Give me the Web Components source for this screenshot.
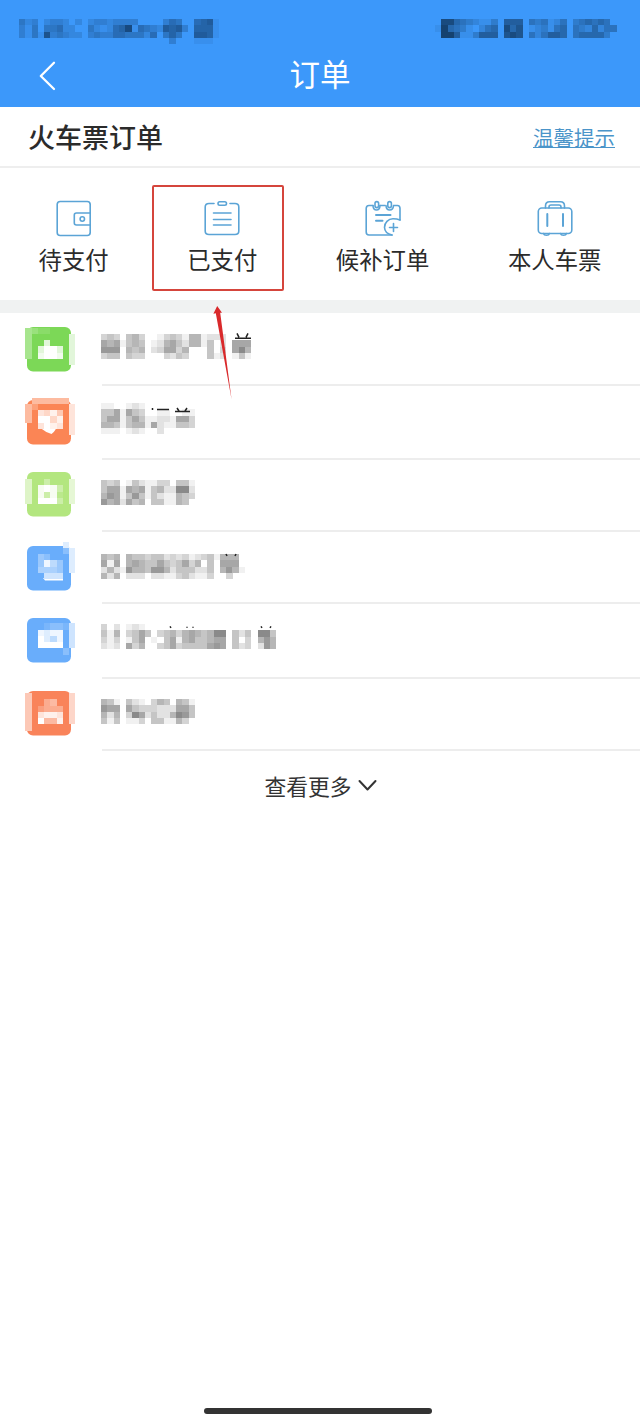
<!DOCTYPE html>
<html lang="zh-CN">
<head>
<meta charset="utf-8">
<title>订单</title>
<style>
    html, body { margin: 0; background: #fff; }
    body {
        font-family: "Noto Sans CJK SC", "Noto Sans", sans-serif;
        color: #2b2b2b;
    }
</style>
</head>
<body>

<orders-page>
    <status-bar slot="top"></status-bar>
    <nav-bar slot="top">订单</nav-bar>

    <section-head slot="top">火车票订单<span slot="link">温馨提示</span></section-head>

    <action-row slot="top">
        <action-item icon="wallet">待支付</action-item>
        <action-item icon="clipboard" marked>已支付</action-item>
        <action-item icon="calendar">候补订单</action-item>
        <action-item icon="suitcase">本人车票</action-item>
    </action-row>

    <order-list slot="list"></order-list>
    <more-link slot="list">查看更多</more-link>
</orders-page>

<template id="orders-page">
    <style>
        :host { display: flex; flex-direction: column; width: 640px; height: 1423px; overflow: hidden; }
        .gap { height: 13px; background: #f0f2f2; }
        .home { margin: auto 0 9px 204px; width: 228px; height: 6px; border-radius: 3px; background: #333; }
    </style>
    <slot name="top"></slot>
    <div class="gap"></div>
    <slot name="list"></slot>
    <div class="home"></div>
</template>

<template id="status-bar">
    <style>
        :host {
            display: flex; justify-content: space-between; box-sizing: border-box;
            height: 45px; padding: 19px 23px 0 19px; background: #3c98fa;
        }
    </style>
    <pixel-mosaic ink="#184a80" paper="#3c98fa" rows="4230233202023323333....3540.5671|31404452200421256915432767306661|3141834322034335544425.464..7761|........................3...111"></pixel-mosaic>
    <pixel-mosaic ink="#154270" paper="#3c98fa" rows="08854321130666.434124.3454540|1954310245.857.123145.4325244|0996113666.787.424665.455553."></pixel-mosaic>
</template>

<template id="nav-bar">
    <style>
        :host {
            display: grid; grid-template-columns: 80px 1fr 80px; align-items: center;
            height: 62px; background: #3c98fa; color: #fff;
        }
        svg { margin-left: 38px; }
        .title { text-align: center; font-size: 30.5px; line-height: 56px; margin-top: -6px; }
    </style>
    <svg width="20" height="30" viewBox="0 0 20 30" fill="none" stroke="#fff" stroke-width="2.3" stroke-linecap="round" stroke-linejoin="round"><path d="M16 1.8 2.8 15 16 28"/></svg>
    <div class="title"><slot></slot></div>
</template>

<template id="section-head">
    <style>
        :host {
            display: flex; justify-content: space-between; align-items: center; box-sizing: border-box;
            height: 61px; padding: 0 25px 0 28px; border-bottom: 2px solid #eeeeee;
            font-size: 27px; font-weight: 500;
        }
        .link {
            font-size: 20.5px; font-weight: 400; line-height: 20px; color: #4a94c9;
            border-bottom: 1.5px solid #4a94c9; margin-top: 1px;
        }
    </style>
    <span><slot></slot></span>
    <span class="link"><slot name="link"></slot></span>
</template>

<template id="action-row">
    <style>
        :host {
            display: flex; justify-content: space-between; align-items: flex-start; box-sizing: border-box;
            height: 132px; padding: 32px 38.5px 0 38.5px;
        }
    </style>
    <slot></slot>
</template>

<template id="action-item">
    <style>
        :host { display: flex; flex-direction: column; align-items: center; position: relative; font-size: 23.4px; line-height: 34px; }
        .icon { height: 38px; margin-bottom: 4px; }
        .icon svg { display: block; }
        .mark, .arrow { display: none; position: absolute; }
        :host([marked]) .mark { display: block; left: -35px; top: -15px; width: 128px; height: 102px; border: 2px solid #d5453c; border-radius: 2px; }
        :host([marked]) .arrow { display: block; left: 25px; top: 105px; z-index: 2; }
    </style>
    <div class="icon"></div>
    <div><slot></slot></div>
    <div class="mark"></div>
    <svg class="arrow" width="24" height="96" viewBox="0 0 24 96"><path d="M5.2 1 1.4 8.8 3.8 8.2 19.6 94.5 8.2 7.8 10 7.8Z" fill="#d9292b"/></svg>
</template>

<template id="order-list">
    <style>
        :host { display: grid; grid-template-rows: 73px 74px 72px 72px 75px 72px; }
    </style>
</template>

<template id="order-row">
    <style>
        :host { display: flex; align-items: flex-start; padding-left: 27px; }
        .tile { flex: none; width: 44px; height: 44px; overflow: visible; }
        .line {
            flex: 1; align-self: stretch; box-sizing: border-box; margin-left: 31px;
            border-bottom: 2px solid #ededed;
        }
        .line pixel-mosaic { margin-left: -1px; }
    </style>
    <svg class="tile" viewBox="0 0 44 44"></svg>
    <div class="line"></div>
</template>

<template id="more-link">
    <style>
        :host { display: flex; justify-content: center; align-items: center; gap: 6px; height: 68px; padding-left: 1px; font-size: 21.8px; color: #333; }
    </style>
    <slot></slot>
    <svg width="19" height="13" viewBox="0 0 19 13" fill="none" stroke="#333" stroke-width="2" stroke-linecap="round" stroke-linejoin="round"><path d="M1.5 2 9.5 10.5 17.5 2"/></svg>
</template>

<script>
    const CELL = 6.26

    // one character per cell: 0 = paper, 9 = ink, anything else is left empty
    function cells(rows, ink, paper, x0 = 0, y0 = 0){
        let out = ''
        rows.split('|').forEach((row, r) => {
            [...row].forEach((c, i) => {
                if(c < '0' || c > '9') return
                const mix = Math.round(c / 9 * 100)
                out += `<rect x="${(x0 + i * CELL).toFixed(2)}" y="${(y0 + r * CELL).toFixed(2)}" width="6.3" height="6.3" style="fill:color-mix(in srgb, ${ink} ${mix}%, ${paper})"/>`
            })
        })
        return out
    }

    const ICONS = {
        wallet: `<rect x="1.2" y="1.5" width="33" height="34" rx="3"/>
            <path d="M34 13H20.5Q18.3 13 18.3 15V23Q18.3 25 20.5 25H34"/><circle cx="26.3" cy="19" r="2.2"/>`,
        clipboard: `<path d="M10 3.5H5Q1.2 3.5 1.2 7V31Q1.2 34.5 5 34.5H31Q34.8 34.5 34.8 31V7Q34.8 3.5 31 3.5H26"/>
            <rect x="14" y="1.8" width="8.5" height="3.4" rx="1.7"/>
            <path d="M9.5 13H27M9.5 19.5H27M9.5 25H27"/>`,
        calendar: `<path d="M8 5.5H4Q1.2 5.5 1.2 8.5V32Q1.2 35 4 35H27M15 5.5H20M29 5.5H32.5Q35 5.5 35 8.5V20"/>
            <path d="M8 5.5Q8.2 10 11.5 10T15 5.5M21 5.5Q21.2 10 24.7 10T28.5 5.5"/>
            <rect x="10" y="1.6" width="3.6" height="6" rx="1.8"/><rect x="22.8" y="1.6" width="3.6" height="6" rx="1.8"/>
            <path d="M11 15H25.5M11 20.7H17.5" stroke-width="2"/>
            <path d="M35 20Q32 18.8 28 18.8A8.6 8.6 0 0 0 19.5 27.5Q19.8 33.5 27 35M28.5 23.5V31.5M24.5 27.5H32.5"/>`,
        suitcase: `<rect x="1.3" y="8" width="33.5" height="25.5" rx="3.5"/>
            <path d="M8.5 8V6Q8.5 1.7 12.5 1.7H23.5Q27.5 1.7 27.5 6V8M12 8V7Q12 5 14 5H22Q24 5 24 7V8"/>
            <path d="M10.3 14V26M26 14V26" stroke-width="2"/>
            <path d="M6.5 33.5Q7 35.3 9.5 35.3T12.5 33.5M23.5 33.5Q24 35.3 26.5 35.3T29.5 33.5"/>`
    }

    const ORDERS = [
        {
            color: '#7cd857', top: 14, tileY: .5, tile: '321100..|3......7|3..7...7|3.7997.7|3.8998.7|.......7',
            textY: 20.7,
            text: '343.453.013431551222|6561454.1256425514.2.666|777.545.236635...4.3.685|344.433...3243...412.141',
            marks: 'M136 20L138 24M147 20L145 24M134 25H150'
        },
        {
            color: '#fb8555', top: 13.5, tileY: -2.5, tile: '.444444.|42.....7|4.7685.7|4.9968.7|..7987.7|.......7',
            glyph: 'M11 12H30V25Q29 31 24.5 34Q12 30 11 22Z',
            textY: 17,
            text: '11..121|4461643..11..11|466146411221663|554145516211443|111.121..2',
            marks: 'M51.5 24V22M56 23.5H68M76 22L78 25M86 22L84 25M74 25.5H89'
        },
        {
            color: '#b3e67f', top: 12, tileY: 7, tile: '5..3...6|5.8983.6|5.8381.6|5.9993.6', textY: 19.5,
            text: '434.1421133.441|466165614522882|576147414211543|75626450441154'
        },
        {
            color: '#69adfb', top: 14, tileY: -4.3, tile: '......7.|......27|..320..7|..3853.7|..4443.7|...666..',
            glyph: 'M16 32H36V34.5H18Z', textY: 22,
            text: '545.544344232312341555|616.56544643463504.666|252175547752444224.5751|525.222.2211342113..3.',
            marks: 'M125 22L126 24M135 22L134 24'
        },
        {
            color: '#69adfb', top: 13.5, tileY: 5.3, tile: '...12216|..8788.6|..9758.6|..9999.6|......2.', textY: 19.7,
            text: '3.2.121|415.3464.34535654588.424.884|313.146.104615644566.403.575|212.635..346344446760423.275',
            marks: 'M69 22L70 23.5M86 22.5V23.5M92 22.5V23.5M160 22L161 23.5M170 22L169 23.5'
        },
        {
            color: '#f9835a', top: 12, tileY: 2, tile: '5......6|5..34..6|5.2333.6|5.7887.6|5.9448.6|5.......', textY: 20,
            text: '541.421.354.541|766.64333222664|525.38624225874|414.1130441153'
        }
    ]

    class BaseElement extends HTMLElement {
        constructor(){
            super()
            const template = document.querySelector('#' + this.localName)
            this.attachShadow({ mode: 'open' })
            if(template) this.shadowRoot.appendChild(template.content.cloneNode(true))
        }
    }

    class PixelMosaic extends BaseElement {
        connectedCallback(){
            const rows = this.getAttribute('rows')
            const cols = Math.max(...rows.split('|').map(r => r.length))
            const count = rows.split('|').length
            const ink = this.getAttribute('ink') || '#7c7c7c'
            const paper = this.getAttribute('paper') || '#fff'
            const marks = this.getAttribute('marks') || ''
            this.shadowRoot.innerHTML = `
                <style>:host { display: block; } svg { display: block; overflow: visible; }</style>
                <svg width="${cols * CELL}" height="${count * CELL}" shape-rendering="crispEdges">
                    ${cells(rows, ink, paper)}
                </svg>`
            if(marks){
                const y = this.getAttribute('marks-y')
                this.shadowRoot.querySelector('svg').innerHTML +=
                    `<path d="${marks}" transform="translate(0 ${-y})" fill="none" stroke="#222" stroke-width="1.5" shape-rendering="auto"/>`
            }
        }
    }

    class ActionItem extends BaseElement {
        connectedCallback(){
            this.shadowRoot.querySelector('.icon').innerHTML =
                `<svg width="36" height="38" viewBox="0 0 36 38" fill="none" stroke="#5ba4d6" stroke-width="1.6" stroke-linecap="round">${ICONS[this.getAttribute('icon')]}</svg>`
        }
    }

    class OrderRow extends BaseElement {
        set order(o){
            const glyph = o.glyph ? `<path d="${o.glyph}" fill="#fff"/>` : ''
            const tile = this.shadowRoot.querySelector('.tile')
            tile.style.marginTop = o.top + 'px'
            tile.innerHTML =
                `<rect width="44" height="44.5" rx="6" fill="${o.color}"/>${glyph}` +
                `<g shape-rendering="crispEdges">${cells(o.tile, '#fff', o.color, -1.7, o.tileY)}</g>`

            const text = document.createElement('pixel-mosaic')
            text.setAttribute('rows', o.text)
            if(o.marks){
                text.setAttribute('marks', o.marks)
                text.setAttribute('marks-y', o.textY)
            }
            const line = this.shadowRoot.querySelector('.line')
            line.style.paddingTop = o.textY + 'px'
            line.appendChild(text)
        }
    }

    class OrderList extends BaseElement {
        connectedCallback(){
            ORDERS.forEach(order => {
                const row = document.createElement('order-row')
                row.order = order
                this.shadowRoot.appendChild(row)
            })
        }
    }

    customElements.define('pixel-mosaic', PixelMosaic)
    customElements.define('order-row', OrderRow)
    customElements.define('order-list', OrderList)
    customElements.define('action-item', ActionItem)
    customElements.define('action-row', class extends BaseElement {})
    customElements.define('section-head', class extends BaseElement {})
    customElements.define('more-link', class extends BaseElement {})
    customElements.define('nav-bar', class extends BaseElement {})
    customElements.define('status-bar', class extends BaseElement {})
    customElements.define('orders-page', class extends BaseElement {})
</script>
</body>
</html>
